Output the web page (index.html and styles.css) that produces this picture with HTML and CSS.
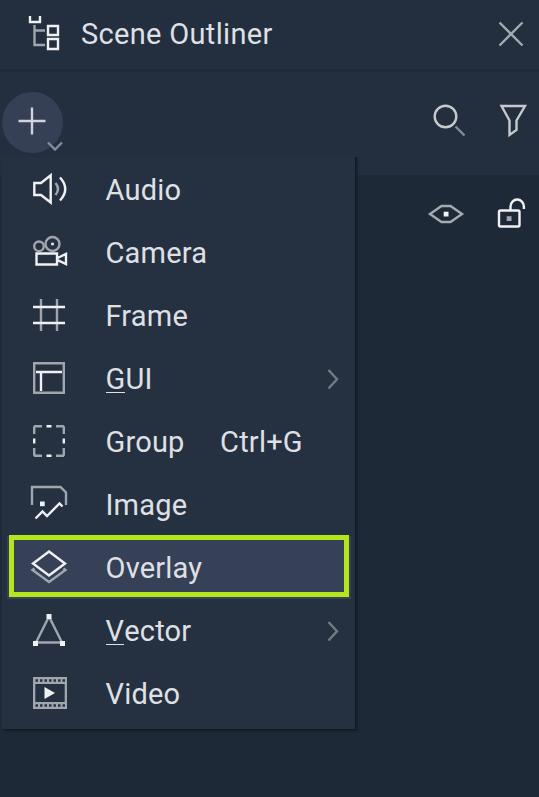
FILE: index.html
```html
<!DOCTYPE html>
<html lang="en">
<head>
<meta charset="utf-8">
<title>Scene Outliner</title>
<link rel="stylesheet" href="styles.css">
</head>
<body>
<div class="panel">
  <header class="title-bar">
    <svg class="title-icon" viewBox="24 10 44 49" width="44" height="49">
      <path class="dim" d="M34.500 25V45H45M34.500 30.500H45"/>
      <path d="M30 16V22H40V16M48 26H58V35H48ZM48 39H58V49H48Z"/>
    </svg>
    <h1 class="title">Scene Outliner</h1>
    <svg class="close" viewBox="495 18 32 33" width="32" height="33">
      <path class="soft" d="M499.500 22.500L522.500 45.500M522.500 22.500L499.500 45.500"/>
    </svg>
  </header>
  <div class="toolbar">
    <div class="add">
      <svg viewBox="2 92 64 64" width="64" height="64">
        <path d="M18.500 121H45.500M32 107.500V134.500"/>
        <path class="faint" d="M48 142.500L55 149.500L62 142.500"/>
      </svg>
    </div>
    <svg class="tools" viewBox="430 100 100 40" width="100" height="40">
      <circle class="light" cx="445.500" cy="116.500" r="10.800"/>
      <path class="faint" d="M455.500 126.500L464.500 135.500"/>
      <path class="light" d="M501.500 106H525L516.500 120.500V130L509.500 135V120.500Z"/>
    </svg>
  </div>
  <div class="tree-head">
    <svg viewBox="425 194 105 40" width="105" height="40">
      <path class="soft" d="M430 214L441.500 206H450.500L462 214L450.500 222H441.500Z"/>
      <rect class="fill" x="443.700" y="211.700" width="4.800" height="4.800"/>
      <rect x="499" y="210.500" width="20.500" height="16" rx="1.500"/>
      <path d="M510.500 210V206.500A6.700 7 0 0 1 523.900 206.500V209"/>
      <rect class="fill-dim" x="506.700" y="216.200" width="4.800" height="4.800"/>
    </svg>
  </div>
  <ul class="menu">
    <li class="item">
      <svg class="icon" viewBox="24 158 50 63" width="50" height="63">
        <path d="M34.300 183H41L50.700 175.200V202.500L41 195H34.300Z"/>
        <path class="dim" d="M55.500 183Q60.500 189 55.500 195"/>
        <path d="M60 177.500Q70.500 189 60 200.500"/>
      </svg>
      <span class="label">Audio</span>
    </li>
    <li class="item">
      <svg class="icon" viewBox="24 221 50 63" width="50" height="63">
        <circle class="dim" cx="39" cy="246.300" r="4.800"/>
        <circle class="dim" cx="52.500" cy="244" r="7"/>
        <rect class="fill" x="51.200" y="242.700" width="2.600" height="2.600"/>
        <path d="M36.500 253.500H57V264.500H36.500ZM57.500 258L66 254V264L57.500 260Z"/>
      </svg>
      <span class="label">Camera</span>
    </li>
    <li class="item">
      <svg class="icon" viewBox="24 284 50 63" width="50" height="63">
        <path class="dim" d="M41 299V331M57 299V331"/>
        <path d="M33 307H65M33 323H65"/>
      </svg>
      <span class="label">Frame</span>
    </li>
    <li class="item">
      <svg class="icon" viewBox="24 347 50 63" width="50" height="63">
        <path class="dim" d="M34.200 363.200H63.800V392.800H34.200Z"/>
        <path d="M36 372H62M41 372V391"/>
      </svg>
      <span class="label"><span class="key">G</span>UI</span>
      <svg class="arrow" viewBox="320 363 24 32" width="24" height="32"><path class="faint" d="M328.500 370L337 379.300L328.500 388.500"/></svg>
    </li>
    <li class="item">
      <svg class="icon" viewBox="24 410 50 63" width="50" height="63">
        <path class="dim" d="M34.200 434V427.200L35 426.200H42M56 426.200H63L63.800 427.200V434M63.800 448V454.800L63 455.800H56M42 455.800H35L34.200 454.800V448"/>
        <path d="M46.500 426.200H51.500M46.500 455.800H51.500M34.200 438.500V443.500M63.800 438.500V443.500"/>
      </svg>
      <span class="label">Group</span>
      <span class="shortcut">Ctrl+G</span>
    </li>
    <li class="item">
      <svg class="icon" viewBox="24 473 50 63" width="50" height="63">
        <path class="dim" d="M32 505V487H60.500L66 492.500V505"/>
        <rect class="fill" x="40" y="501.500" width="4.700" height="4.700"/>
        <path d="M35.500 518.500L42.500 511.500L47 516L59.500 503.500L62.500 506.500"/>
      </svg>
      <span class="label">Image</span>
    </li>
    <li class="item selected">
      <svg class="icon" viewBox="24 536 50 63" width="50" height="63">
        <path class="dim" d="M34.500 568.500L32.500 570L49 582L65.500 570L63.500 568.500"/>
        <path d="M49 551.500L65 563.500L49 575.500L33 563.500Z"/>
      </svg>
      <span class="label">Overlay</span>
    </li>
    <li class="item">
      <svg class="icon" viewBox="24 599 50 63" width="50" height="63">
        <path class="dim" d="M49 616.500L36 642.500H62Z"/>
        <path class="fill" d="M46.500 614H51.500V619H46.500ZM33 641H38V646H33ZM60 641H65V646H60Z"/>
      </svg>
      <span class="label"><span class="key">V</span>ector</span>
      <svg class="arrow" viewBox="320 615 24 32" width="24" height="32"><path class="faint" d="M328.500 622L337 631.300L328.500 640.500"/></svg>
    </li>
    <li class="item">
      <svg class="icon" viewBox="24 662 50 63" width="50" height="63">
        <path class="fill-dim" fill-rule="evenodd" d="M33 677H67V709H33ZM35.300 684V702H64.700V684Z"/>
        <path class="holes" d="M35.500 680.500H66M35.500 705.500H66"/>
        <path class="fill" d="M44.500 687L55 693L44.500 699Z"/>
      </svg>
      <span class="label">Video</span>
    </li>
  </ul>
</div>
</body>
</html>
```
FILE: styles.css
```css
* { box-sizing: border-box; }

body {
  margin: 0;
  background: #1e2937;
  color: #dfe0e5;
  font-family: Roboto, "Liberation Sans", sans-serif;
  font-size: 29px;
  font-weight: 400;
}

.panel {
  position: relative;
  width: 539px;
  height: 797px;
  overflow: hidden;
  background: #1e2937;
}

svg {
  display: block;
  flex: none;
  fill: none;
  stroke: #f0f1f3;
  stroke-width: 2.4;
}

.dim { stroke: #a0a5ae; }
.soft { stroke: #a5aab0; }
.light { stroke: #c6c9ce; }
.faint { stroke: #858b96; }
.fill { fill: #f0f1f3; stroke: none; }
.fill-dim { fill: #a0a5ae; stroke: none; }
.holes { stroke: #253040; stroke-width: 2.5; stroke-dasharray: 2.5 2; }
.arrow .faint { stroke: #747b86; }

.title-bar {
  display: flex;
  align-items: center;
  height: 72px;
  padding: 0 12px 0 24px;
  background: #232e3e;
  border-bottom: 3px solid #1f2937;
}

.title {
  margin: 0 0 2px 13px;
  font-size: 29px;
  font-weight: 400;
  line-height: 40px;
  letter-spacing: 0.32px;
}

.close { margin-left: auto; }

.toolbar {
  display: flex;
  justify-content: space-between;
  height: 103px;
  padding: 20px 9px 0 2px;
  background: #232e3e;
}

.add {
  width: 61px;
  height: 61px;
  border-radius: 50%;
  background: #354057;
}

.add svg { overflow: visible; stroke: #d0d3d8; }

.tools { margin-top: 8px; }

.tree-head {
  display: flex;
  justify-content: flex-end;
  padding: 19px 9px 0 0;
}

.menu {
  position: absolute;
  left: 2px;
  top: 153px;
  width: 353px;
  height: 576px;
  margin: 0;
  padding: 5px 4px 4px 5px;
  list-style: none;
  background: #253040;
  box-shadow: 2px 2px 2px #121a24;
  clip-path: inset(4px -8px -8px 0);
}

.item {
  display: flex;
  align-items: center;
  height: 63px;
  padding-left: 17px;
}

.label {
  margin-left: 31.5px;
  line-height: 40px;
  letter-spacing: 0.2px;
}

.key {
  display: inline-block;
  height: 34px;
  line-height: 40px;
  border-bottom: 1px solid #dfe0e5;
}

.shortcut { margin-left: 35.5px; letter-spacing: 0.2px; }

.arrow { margin-left: auto; margin-right: 7px; }

.selected {
  position: relative;
  background: #364158;
}

.selected::after {
  content: "";
  position: absolute;
  inset: -1px 2px 2px 2px;
  border: 5px solid #b5e61d;
}
```
